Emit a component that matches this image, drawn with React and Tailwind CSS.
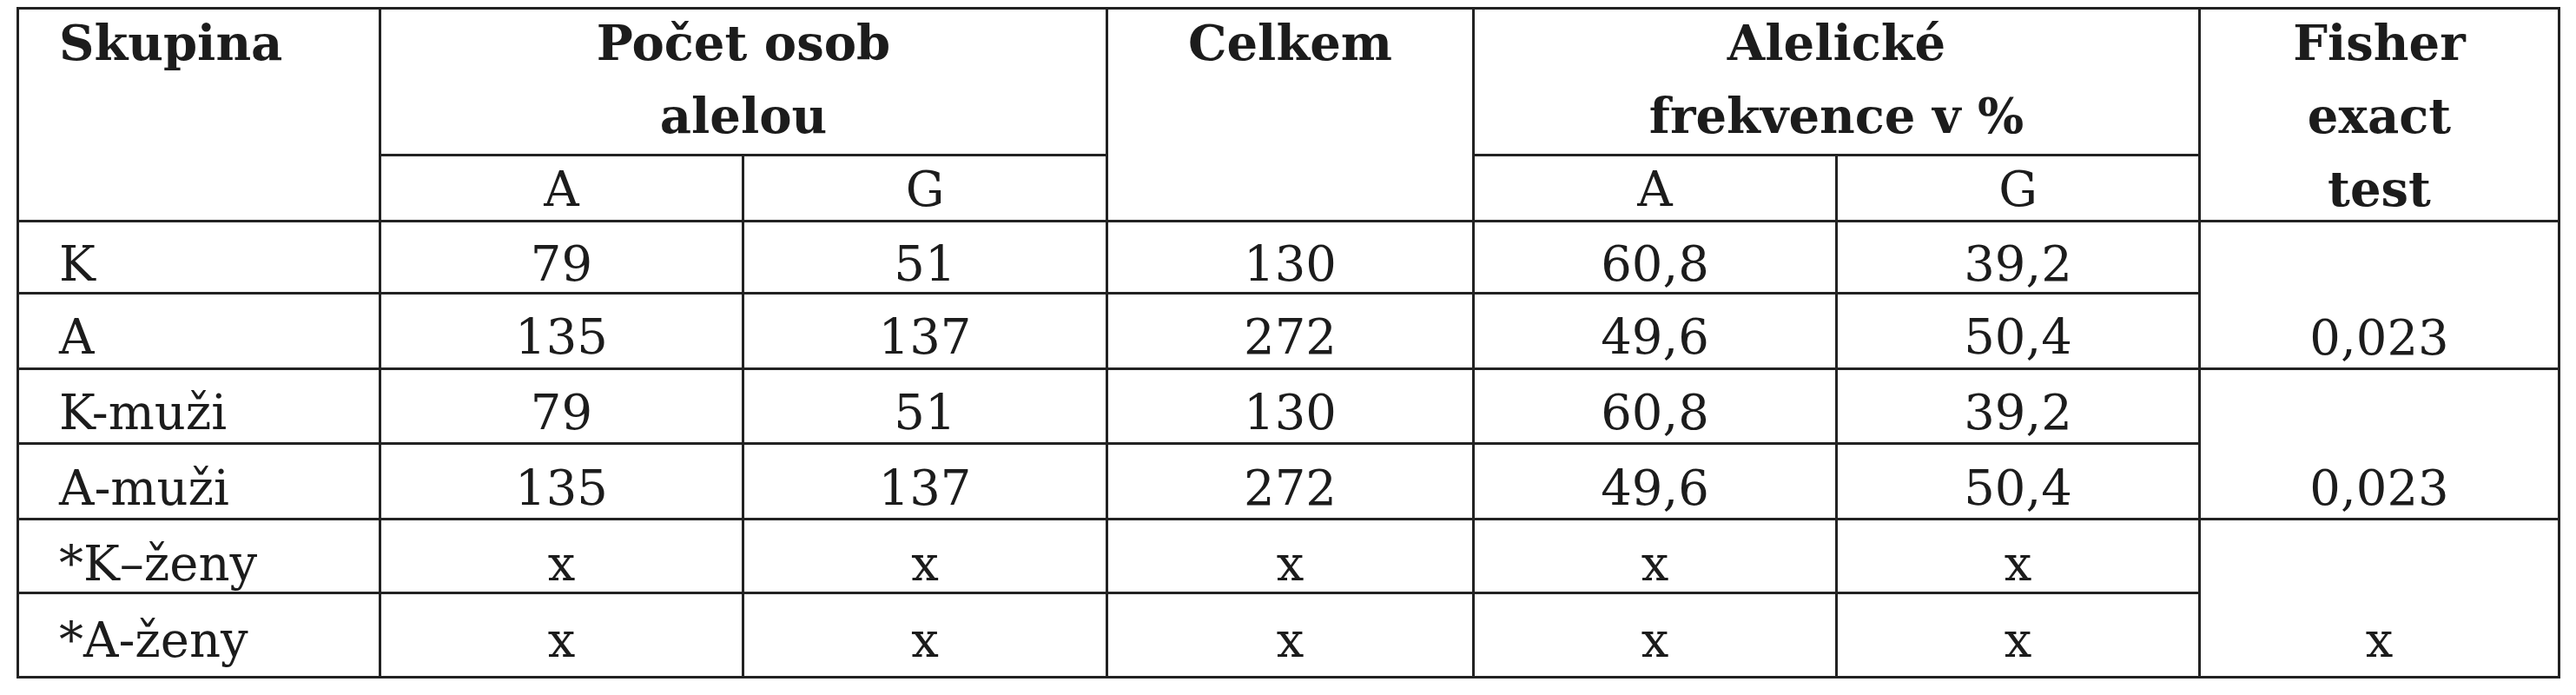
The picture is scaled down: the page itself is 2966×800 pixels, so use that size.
import React from "react";

const cell = "border-[3px] border-[#222] align-top text-center";

const rows = [
  { name: "K", a: "79", g: "51", total: "130", fa: "60,8", fg: "39,2", h: "h-[82px]", pt: "pt-[16px]" },
  { name: "A", a: "135", g: "137", total: "272", fa: "49,6", fg: "50,4", h: "h-[87px]", pt: "pt-[17px]" },
  { name: "K-muži", a: "79", g: "51", total: "130", fa: "60,8", fg: "39,2", h: "h-[86px]", pt: "pt-[17px]" },
  { name: "A-muži", a: "135", g: "137", total: "272", fa: "49,6", fg: "50,4", h: "h-[87px]", pt: "pt-[18px]" },
  { name: "*K–ženy", a: "x", g: "x", total: "x", fa: "x", fg: "x", h: "h-[82px]", pt: "pt-[18px]" },
  { name: "*A-ženy", a: "x", g: "x", total: "x", fa: "x", fg: "x", h: "h-[97px]", pt: "pt-[21px]" },
];

// fisher column spans two body rows each
const fisher = {
  0: { value: "0,023", pb: "pb-[2px]" },
  2: { value: "0,023", pb: "pb-[2px]" },
  4: { value: "x", pb: "pb-[9px]" },
};

export default function App() {
  return (
    <div
      className="min-h-[800px] bg-white pt-[8px] pl-[19px] text-[#1c1c1c]"
      style={{ fontFamily: '"DejaVu Serif", "Liberation Serif", serif' }}
    >
      <table className="table-fixed border-collapse text-[56px]">
        <colgroup>
          <col className="w-[417px]" />
          <col className="w-[418px]" />
          <col className="w-[419px]" />
          <col className="w-[422px]" />
          <col className="w-[418px]" />
          <col className="w-[418px]" />
          <col className="w-[414px]" />
        </colgroup>
        <thead>
          <tr className="h-[169px]">
            <th rowSpan={2} className={`${cell} !text-left pl-[46px] pt-[6px] font-bold leading-[64px]`}>
              Skupina
            </th>
            <th colSpan={2} className={`${cell} font-bold leading-[84px]`}>
              <div className="-mt-[4px] h-[160px]">
                Počet osob
                <br />
                alelou
              </div>
            </th>
            <th rowSpan={2} className={`${cell} pt-[6px] font-bold leading-[64px]`}>
              Celkem
            </th>
            <th colSpan={2} className={`${cell} font-bold leading-[84px]`}>
              <div className="-mt-[4px] h-[160px]">
                Alelické
                <br />
                frekvence v %
              </div>
            </th>
            <th rowSpan={2} className={`${cell} font-bold leading-[84px]`}>
              <div className="-mt-[4px] h-[230px]">
                Fisher
                <br />
                exact
                <br />
                test
              </div>
            </th>
          </tr>
          <tr className="h-[76px]">
            <th className={`${cell} pt-[6px] font-normal leading-[64px]`}>A</th>
            <th className={`${cell} pt-[6px] font-normal leading-[64px]`}>G</th>
            <th className={`${cell} pt-[6px] font-normal leading-[64px]`}>A</th>
            <th className={`${cell} pt-[6px] font-normal leading-[64px]`}>G</th>
          </tr>
        </thead>
        <tbody className="leading-[64px]">
          {rows.map((row, i) => (
            <tr key={row.name} className={row.h}>
              <td className={`${cell} ${row.pt} !text-left pl-[46px]`}>{row.name}</td>
              <td className={`${cell} ${row.pt}`}>{row.a}</td>
              <td className={`${cell} ${row.pt}`}>{row.g}</td>
              <td className={`${cell} ${row.pt}`}>{row.total}</td>
              <td className={`${cell} ${row.pt}`}>{row.fa}</td>
              <td className={`${cell} ${row.pt}`}>{row.fg}</td>
              {fisher[i] && (
                <td rowSpan={2} className={`${cell} !align-bottom ${fisher[i].pb}`}>
                  {fisher[i].value}
                </td>
              )}
            </tr>
          ))}
        </tbody>
      </table>
    </div>
  );
}
